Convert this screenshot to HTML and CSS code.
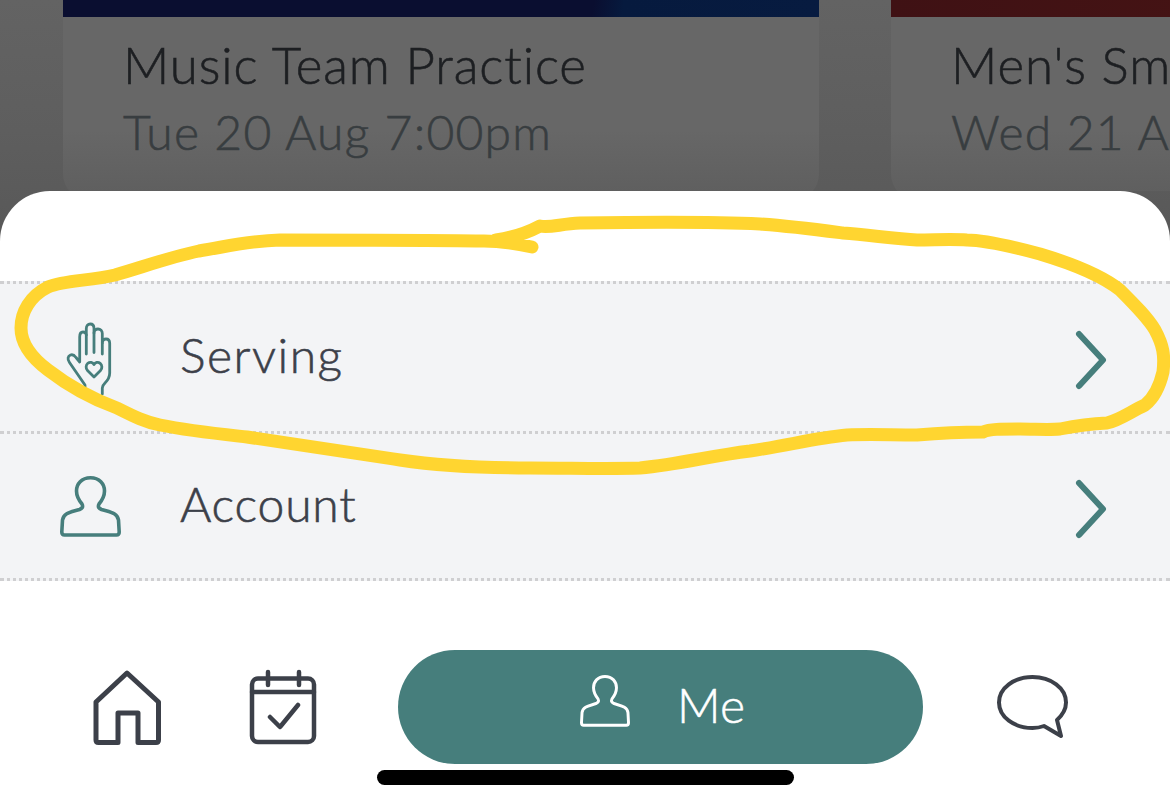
FILE: index.html
```html
<!DOCTYPE html>
<html lang="en">
<head>
<meta charset="utf-8">
<title>Me</title>
<link rel="stylesheet" href="styles.css">
</head>
<body>
<div class="screen">
  <section class="cards">
    <article class="card">
      <div class="band band-blue"></div>
      <div class="card-body">
        <h2 class="card-title">Music Team Practice</h2>
        <p class="card-date">Tue 20 Aug 7:00pm</p>
      </div>
    </article>
    <article class="card">
      <div class="band band-red"></div>
      <div class="card-body">
        <h2 class="card-title">Men's Small</h2>
        <p class="card-date">Wed 21 Aug</p>
      </div>
    </article>
  </section>

  <section class="sheet">
    <ul class="menu">
      <li class="menu-row row-serving">
        <span class="menu-icon">
          <svg class="hand" viewBox="0 0 48 76" width="48" height="76" fill="none" stroke="#467e7c" stroke-width="2.8" stroke-linecap="round" stroke-linejoin="round">
            <path d="M20 73V64L4.500 41.500C2 38 3 35 5.500 34C8 33 9.500 34.500 11 36.500L14.700 41V16C14.700 12.500 16.500 11 18 11C19.800 11 21.300 12.500 21.300 14V7.500C21.300 4.500 23 3 25.200 3C27.500 3 29 4.500 29 7.500V12C29 9.500 31 8 33 8C35.500 8 37.300 10 37.300 12.500V22C37.300 19.500 39 18 41 18C43.500 18 44.700 20 44.700 22.500V52C44.700 56 43 59 40 62C38 64 37.300 65 37.300 67V73"/>
            <path d="M21.300 14V33M29 12V31.500M37.300 22V33"/>
            <path d="M29 56L22.500 49.500C20.500 47.500 20.800 44 22.800 42.300C25 40.500 27.800 41.300 29 43.500C30.200 41.300 33 40.500 35.200 42.300C37.200 44 37.500 47.500 35.500 49.500Z"/>
          </svg>
        </span>
        <span class="menu-label label-serving">Serving</span>
        <svg class="chevron" viewBox="0 0 32 60" width="32" height="60" fill="none" stroke="#467e7c" stroke-width="6" stroke-linecap="round" stroke-linejoin="round"><path d="M4 4L28 30L4 56"/></svg>
      </li>
      <li class="menu-row row-account">
        <span class="menu-icon">
          <svg viewBox="0 0 61 61" width="61" height="61" fill="none" stroke="#467e7c" stroke-width="3.600" stroke-linecap="round" stroke-linejoin="round"><path d="M30.500 1.800C21.500 1.800 16.500 8 16.500 15C16.500 21 19.500 25 22 28C23.500 31 22 32.500 19.500 33.500C12 36 3.500 36.500 2.500 44L1.800 56Q1.800 59 4.500 59H56.500Q59.200 59 59.200 56L58.500 44C57.500 36.500 49 36 41.500 33.500C39 32.500 37.500 31 39 28C41.500 25 44.500 21 44.500 15C44.500 8 39.500 1.800 30.500 1.800Z"/></svg>
        </span>
        <span class="menu-label">Account</span>
        <svg class="chevron" viewBox="0 0 32 60" width="32" height="60" fill="none" stroke="#467e7c" stroke-width="6" stroke-linecap="round" stroke-linejoin="round"><path d="M4 4L28 30L4 56"/></svg>
      </li>
    </ul>

    <nav class="tabbar">
      <svg class="tab-home" viewBox="0 0 72 78" width="72" height="78" fill="none" stroke="#3c4049" stroke-width="5" stroke-linecap="round" stroke-linejoin="round"><path d="M36 4L5 33V71Q5 73.500 7.500 73.500H27V44H47V73.500H65Q67.500 73.500 67.500 71V33Z"/></svg>
      <svg class="tab-calendar" viewBox="0 0 70 78" width="70" height="78" fill="none" stroke="#3c4049" stroke-width="4.500" stroke-linecap="round" stroke-linejoin="round"><rect x="3" y="9.500" width="62" height="63.500" rx="6"/><path d="M3 23H65M19 3V16M50 3V16M21 48L31 58L49 36"/></svg>
      <a class="tab-me">
        <svg class="tab-me-icon" viewBox="0 0 61 61" width="50" height="52" preserveAspectRatio="none" fill="none" stroke="#fff" stroke-width="3.600" stroke-linecap="round" stroke-linejoin="round"><path d="M30.500 1.800C21.500 1.800 16.500 8 16.500 15C16.500 21 19.500 25 22 28C23.500 31 22 32.500 19.500 33.500C12 36 3.500 36.500 2.500 44L1.800 56Q1.800 59 4.500 59H56.500Q59.200 59 59.200 56L58.500 44C57.500 36.500 49 36 41.500 33.500C39 32.500 37.500 31 39 28C41.500 25 44.500 21 44.500 15C44.500 8 39.500 1.800 30.500 1.800Z"/></svg>
        <span class="tab-me-label">Me</span>
      </a>
      <svg class="tab-chat" viewBox="0 0 74 66" width="74" height="66" fill="none" stroke="#3c4049" stroke-width="4" stroke-linecap="round" stroke-linejoin="round"><path d="M48 52C44 53.500 41 54 36.500 54C18 54 3 43 3 28.500C3 14 18 3 36.500 3C55 3 70 14 70 28.500C70 35 66.500 41 61 46L65 62Z"/></svg>
    </nav>
  </section>

  <div class="home-bar"></div>

  <svg class="scribble" viewBox="0 0 1170 809" width="1170" height="809" fill="none" stroke="#ffd530" stroke-width="13" stroke-linecap="round" stroke-linejoin="round"><path d="M532 247C518 244 500 241 484 241C420 240 340 240 280 240C245 241 225 247 199 251C170 257 140 268 115 275C90 281 65 280 48 287C30 296 21 312 21 328C21 345 32 358 48 370C70 387 95 400 117 408C135 417 145 422 160 425C190 431 220 434 247 437C300 445 350 452 400 460C440 466 480 468 530 468C570 468 610 469 640 468C680 464 710 456 750 451C790 445 815 438 847 435C870 434 890 435 917 435C940 433 960 432 983 432C990 429 1000 429 1020 429C1035 429 1048 430 1060 429C1075 426 1085 424 1107 423C1120 420 1130 412 1145 405C1155 397 1160 385 1163 372C1165 355 1163 345 1155 330C1148 318 1135 305 1120 290C1105 278 1080 266 1040 254C1010 246 985 240 967 240C950 239 935 240 917 240C895 239 870 235 843 233C820 230 790 226 760 224C720 222 650 222 580 223C560 224 550 228 540 226C525 234 510 238 496 240"/></svg>
</div>
</body>
</html>
```
FILE: styles.css
```css
* { box-sizing: border-box; }
html, body { margin: 0; padding: 0; }
body { font-family: "Lato", "Noto Sans", sans-serif; background: #fff; }

.screen {
  position: relative;
  width: 1170px;
  height: 809px;
  overflow: hidden;
  background: linear-gradient(#636363 0, #5e5e5e 130px, #575757 260px);
}

.cards {
  display: flex;
  gap: 72px;
  height: 191px;
  padding-left: 63px;
  overflow: hidden;
}
.card {
  flex: 0 0 756px;
  height: 200px;
  border-radius: 0 0 26px 26px;
  background: linear-gradient(#676767 0, #676767 130px, #5e5e5e 200px);
  overflow: hidden;
}
.band { height: 17px; }
.band-blue { background: linear-gradient(100deg, #0a0e30 0, #0a0e30 70%, #061a3e 74%, #071b40 100%); }
.band-red { background: linear-gradient(90deg, #3f1114, #4c1614); }
.card-body { padding: 18px 0 0 60px; white-space: nowrap; }
.card-title {
  margin: 0;
  font-size: 51px;
  font-weight: 300;
  letter-spacing: 0.900px;
  line-height: 60px;
  color: #1d1f22;
  -webkit-text-stroke: 0.6px currentColor;
}
.card-date {
  margin: 8px 0 0;
  font-size: 48px;
  font-weight: 300;
  letter-spacing: 1.200px;
  line-height: 58px;
  color: #383d40;
  -webkit-text-stroke: 0.6px currentColor;
}

.sheet {
  height: 618px;
  background: #fff;
  border-radius: 50px 50px 0 0;
  padding-top: 90px;
}
.menu { list-style: none; margin: 0; padding: 0; }
.menu-row {
  display: flex;
  align-items: center;
  padding: 0 63px 0 60px;
  background: #f3f4f6;
  border-top: 3px dotted #cfcfd1;
}
.row-serving { height: 150px; }
.row-account { height: 150px; border-bottom: 3px dotted #cfcfd1; }
.menu-icon {
  display: flex;
  justify-content: center;
  flex: 0 0 61px;
  margin-right: 60px;
}
.hand { margin-top: 3px; margin-left: -3px; }
.menu-label {
  font-size: 48px;
  font-weight: 300;
  letter-spacing: 0.800px;
  color: #3c4049;
  margin: -6px 0 0 -1px;
  -webkit-text-stroke: 0.6px currentColor;
}
.label-serving { letter-spacing: 1.500px; }
.chevron { margin-left: auto; margin-top: 5px; }

.tabbar {
  display: flex;
  align-items: center;
  padding: 69px 0 0 91px;
}
.tab-home { flex: none; margin-top: 2px; }
.tab-calendar { flex: none; margin-left: 86px; margin-top: 2px; }
.tab-me {
  flex: none;
  display: flex;
  align-items: center;
  justify-content: center;
  gap: 47px;
  width: 525px;
  height: 114px;
  margin-left: 79px;
  border-radius: 57px;
  background: #467e7c;
  padding-left: 4px;
}
.tab-me-icon { margin-top: -13px; }
.tab-me-label {
  font-size: 48px;
  font-weight: 300;
  color: #fff;
  margin-top: -6px;
  -webkit-text-stroke: 0.5px currentColor;
}
.tab-chat { flex: none; margin-left: 73px; margin-top: -1px; }

.home-bar {
  position: absolute;
  left: 377px;
  top: 770px;
  width: 417px;
  height: 15px;
  border-radius: 8px;
  background: #000;
}
.scribble { position: absolute; left: 0; top: 0; }
```
